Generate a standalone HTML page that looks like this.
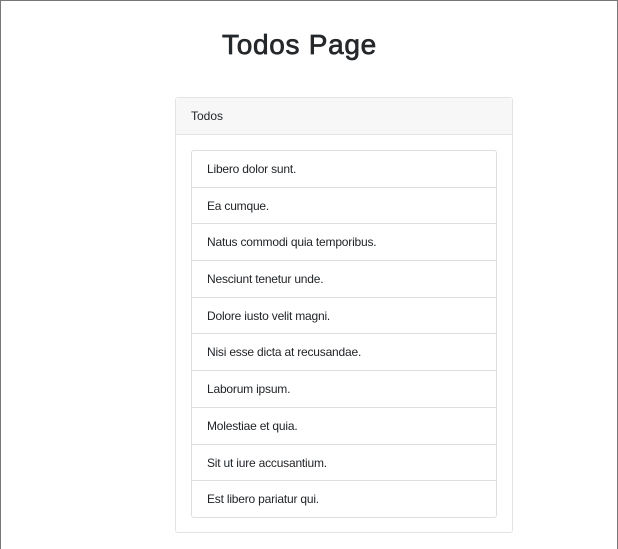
<!DOCTYPE html>
<html><head><style>
html,body{margin:0;padding:0}
body{width:618px;height:548px;position:relative;overflow:hidden;background:#fff;font-family:"Liberation Sans",sans-serif;color:#212529}
.frame{position:absolute;left:0;top:0;width:616px;height:548px;border:1px solid #777;border-bottom:none}
h1{position:absolute;left:222px;top:25px;margin:0;font-size:28px;font-weight:normal;-webkit-text-stroke:0.7px #25282b;line-height:40px;color:#25282b;letter-spacing:0.7px}
.card{position:absolute;left:175px;top:97px;width:336px;height:434px;border:1px solid #e3e3e3;border-radius:3px}
.hdr{height:36px;background:#f7f7f7;border-bottom:1px solid #e3e3e3;font-size:12px;line-height:37px;padding-left:15px}
.list{position:absolute;left:15px;top:52px;width:304px;border:1px solid #dedede;border-radius:3px}
.item{height:35.7px;border-top:1px solid #dedede;font-size:12px;line-height:37px;padding-left:15px;letter-spacing:-0.2px}
.item:first-child{border-top:none}
</style></head><body>
<div class="frame"></div>
<h1>Todos Page</h1>
<div class="card">
<div class="hdr">Todos</div>
<div class="list">
<div class="item">Libero dolor sunt.</div>
<div class="item">Ea cumque.</div>
<div class="item">Natus commodi quia temporibus.</div>
<div class="item">Nesciunt tenetur unde.</div>
<div class="item">Dolore iusto velit magni.</div>
<div class="item">Nisi esse dicta at recusandae.</div>
<div class="item">Laborum ipsum.</div>
<div class="item">Molestiae et quia.</div>
<div class="item">Sit ut iure accusantium.</div>
<div class="item">Est libero pariatur qui.</div>
</div>
</div>
</body></html>
